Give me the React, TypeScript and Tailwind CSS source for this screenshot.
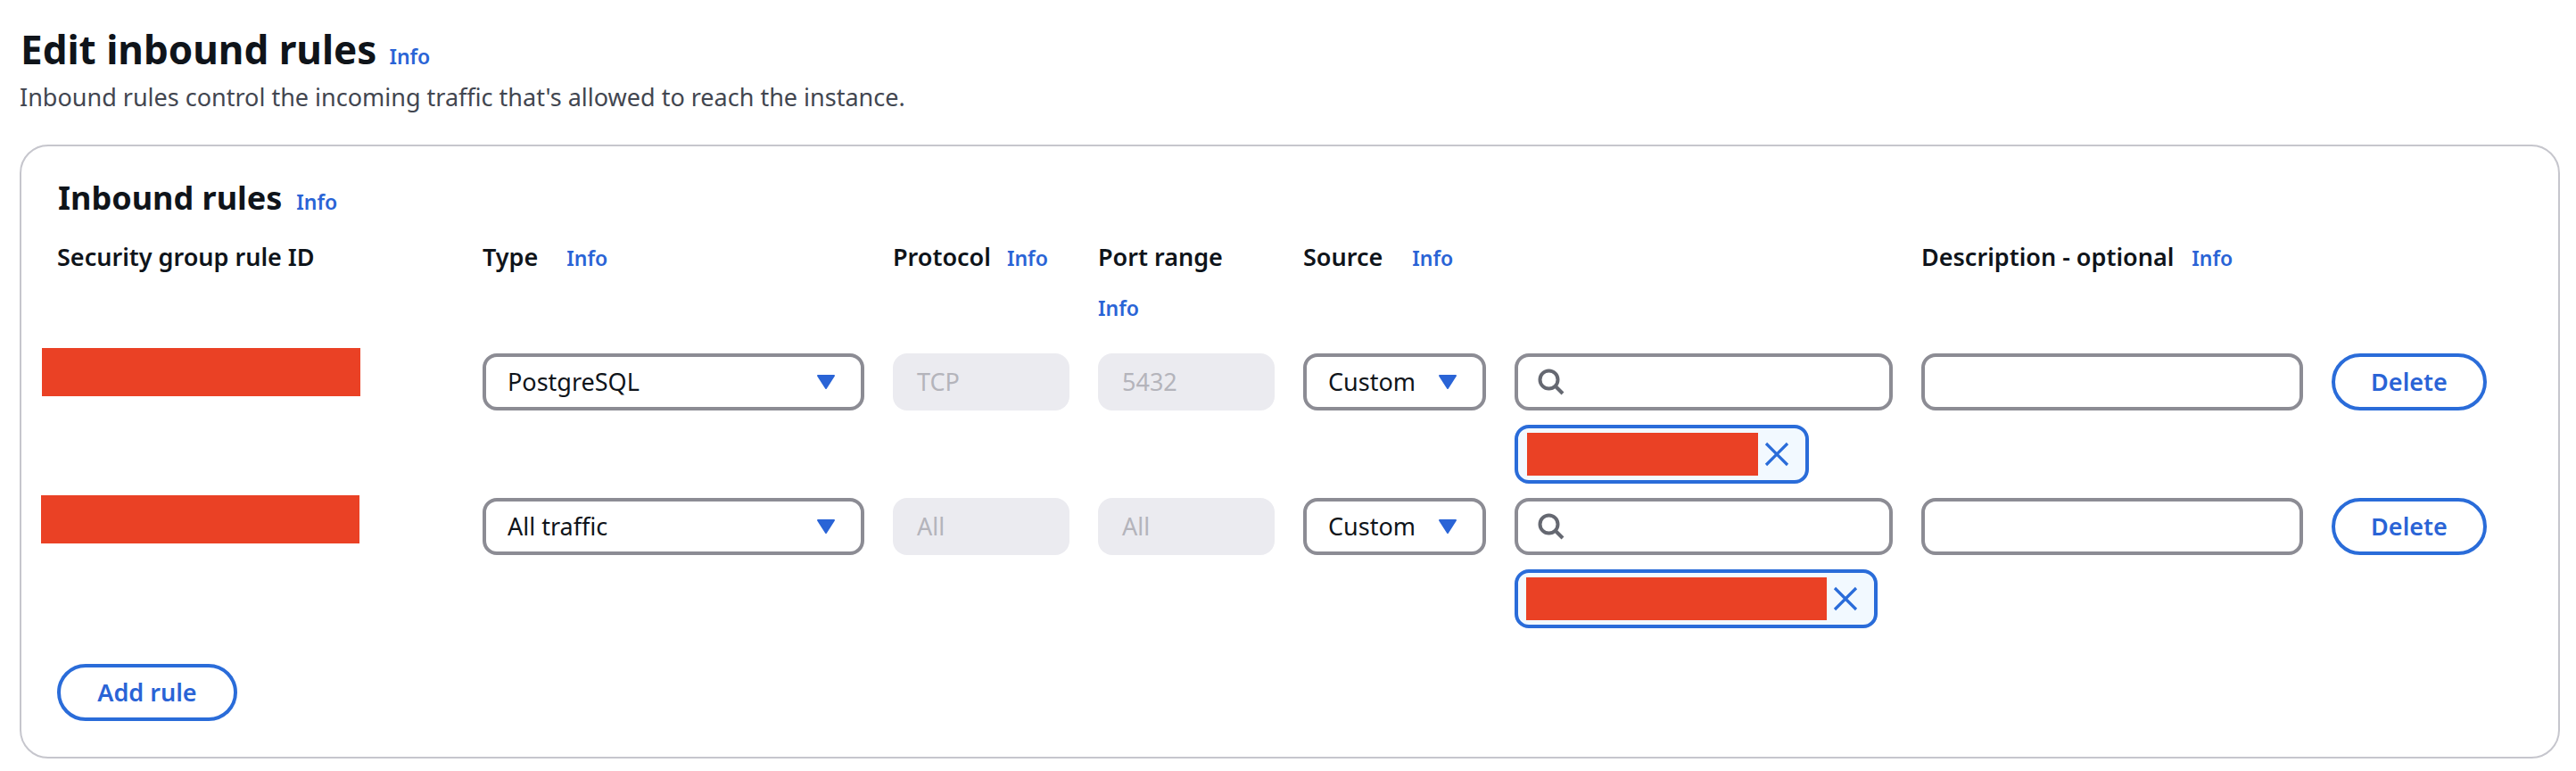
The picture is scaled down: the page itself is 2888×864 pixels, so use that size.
const font = { fontFamily: '"Noto Sans", "Open Sans", sans-serif' };

function Info() {
  return <span className="text-[23px] leading-[30px] font-semibold text-[#2a64d6]">Info</span>;
}

function Select({ label, width }: { label: string; width: string }) {
  return (
    <div className={`${width} h-[64px] flex items-center justify-between rounded-[16px] border-[4px] border-[#8c8c94] bg-white pl-[24px] pr-[27px]`}>
      <span className="text-[27px] text-[#0f141a]">{label}</span>
      <svg width="24" height="18" viewBox="0 0 24 18"><path d="M3 2h18l-9 14z" fill="#2a64d6" stroke="#2a64d6" strokeWidth="2" strokeLinejoin="round" /></svg>
    </div>
  );
}

function Disabled({ label }: { label: string }) {
  return <div className="w-[198px] h-[64px] flex items-center rounded-[16px] bg-[#ebebf0] pl-[27px] text-[27px] text-[#b4b4bb]">{label}</div>;
}

function Search() {
  return (
    <div className="w-[424px] h-[64px] flex items-center rounded-[16px] border-[4px] border-[#8c8c94] bg-white pl-[22px]">
      <svg width="30" height="30" viewBox="0 0 30 30" fill="none" stroke="#656871" strokeWidth="4"><circle cx="12.5" cy="12.5" r="10" /><path d="M20 20l8 8" /></svg>
    </div>
  );
}

function Chip({ w, pad }: { w: string; pad: string }) {
  return (
    <div className={`self-start h-[66px] flex items-center rounded-[16px] border-[4px] border-[#2a6cd9] bg-[#f2f9ff] ${pad} pr-[18px] gap-[7px]`}>
      <div className={`${w} h-[48px] bg-[#ea4125]`} />
      <svg width="28" height="28" viewBox="0 0 28 28" stroke="#2a6cd9" strokeWidth="3.2"><path d="M2 2l24 24M26 2L2 26" /></svg>
    </div>
  );
}

function Btn({ label, w }: { label: string; w: string }) {
  return (
    <div className={`${w} h-[64px] flex items-center justify-center rounded-full border-[4px] border-[#2a6cd9] bg-white text-[27px] font-semibold text-[#2a64d6]`}>{label}</div>
  );
}

function Row({ type, val, chip, barClass, pad }: { type: string; val: string; chip: string; barClass: string; pad: string }) {
  return (
    <div className="flex gap-[32px] items-start">
      <div className="w-[446px] h-[64px]"><div className={`w-[357px] h-[54px] bg-[#ea4125] ${barClass}`} /></div>
      <Select label={type} width="w-[428px]" />
      <Disabled label={val} />
      <Disabled label={val === "TCP" ? "5432" : "All"} />
      <Select label="Custom" width="w-[205px]" />
      <div className="flex flex-col gap-[16px]">
        <Search />
        <Chip w={chip} pad={pad} />
      </div>
      <div className="w-[428px] h-[64px] rounded-[16px] border-[4px] border-[#8c8c94] bg-white" />
      <Btn label="Delete" w="w-[174px]" />
    </div>
  );
}

export default function App() {
  return (
    <div style={font} className="w-[2888px] h-[864px] bg-white pt-[26px] pl-[22px] overflow-hidden">
      <div className="flex items-baseline gap-[14px] pl-[1px]">
        <h1 className="text-[44px] leading-[58px] font-bold text-[#0f141a]">Edit inbound rules</h1>
        <Info />
      </div>
      <p className="text-[27px] leading-[36px] text-[#424650] mt-[7px]">Inbound rules control the incoming traffic that's allowed to reach the instance.</p>
      <div className="mt-[35px] w-[2848px] h-[688px] rounded-[32px] border-[2px] border-[#c6c6cd] pl-[39px] pt-[34px]">
        <div className="flex items-baseline gap-[16px] pl-[2px]">
          <h2 className="text-[36px] leading-[48px] font-bold text-[#0f141a]">Inbound rules</h2>
          <Info />
        </div>
        <div className="flex gap-[32px] mt-[24px] h-[126px] text-[27px] font-semibold text-[#0f141a] leading-[36px]">
          <div className="w-[446px] pl-[1px]">Security group rule ID</div>
          <div className="w-[428px] flex items-baseline gap-[32px]"><span>Type</span><Info /></div>
          <div className="w-[198px] flex items-baseline gap-[18px]"><span>Protocol</span><Info /></div>
          <div className="w-[198px] flex flex-col gap-[24px]"><span>Port range</span><Info /></div>
          <div className="w-[205px] flex items-baseline gap-[33px]"><span>Source</span><Info /></div>
          <div className="w-[424px]" />
          <div className="flex items-baseline gap-[20px]"><span>Description - optional</span><Info /></div>
        </div>
        <div className="flex flex-col gap-[16px]">
          <Row type="PostgreSQL" val="TCP" chip="w-[259px]" barClass="-ml-[16px] -mt-[6px]" pad="pl-[10px]" />
          <Row type="All traffic" val="All" chip="w-[337px]" barClass="-ml-[17px] -mt-[3px]" pad="pl-[9px]" />
        </div>
        <div className="mt-[40px] pl-[1px]"><Btn label="Add rule" w="w-[202px]" /></div>
      </div>
    </div>
  );
}
